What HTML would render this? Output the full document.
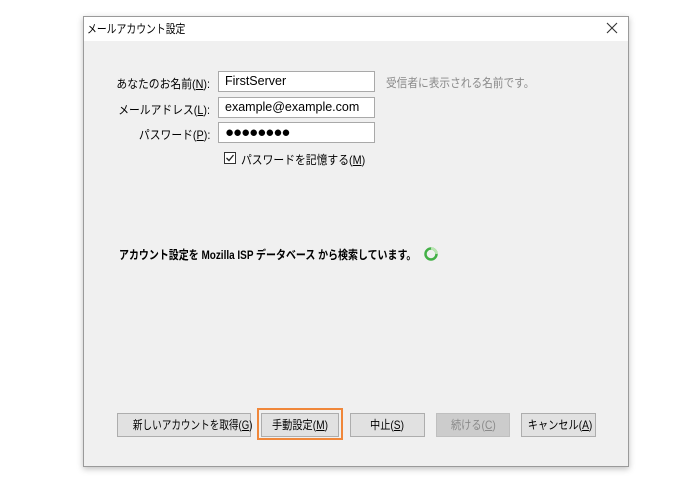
<!DOCTYPE html>
<html><head><meta charset="utf-8"><style>
*{box-sizing:border-box;margin:0;padding:0}
body{width:676px;height:481px;background:#fff;position:relative;font-family:"Liberation Sans","Noto Sans CJK JP",sans-serif;font-size:12px;color:#000;overflow:hidden}
.win{position:absolute;left:83px;top:16px;width:546px;height:451px;background:#f0f0f0;border:1px solid #9a9a9a;box-shadow:0 2px 6px rgba(0,0,0,.25)}
.title{position:absolute;left:0;top:0;width:100%;height:24px;background:#fff;font-size:12px;line-height:24px;padding-left:3px;white-space:nowrap}
.x{position:absolute;right:10px;top:5px}
.abs{position:absolute;white-space:nowrap}
.lbl{position:absolute;right:418px;text-align:right;white-space:nowrap;transform:scaleX(.9);transform-origin:right}
.inp{position:absolute;left:134px;width:157px;height:21px;background:#fff;border:1px solid #a9a9a9;padding-left:6px;line-height:19px;font-size:12.5px}
.btn{position:absolute;top:396px;height:24px;background:#e1e1e1;border:1px solid #adadad;text-align:center;line-height:22px;font-size:12px;white-space:nowrap;overflow:visible}
.btn span{display:inline-block;transform:scaleX(.85);transform-origin:center}
.sx{display:inline-block;transform-origin:left}
u{text-decoration:underline}
</style></head><body>
<div class="win">
<div class="title"><span class="sx" style="transform:scaleX(.82)">メールアカウント設定</span><svg class="x" width="12" height="12"><path d="M1 1L11 11M11 1L1 11" stroke="#333" stroke-width="1.1"/></svg></div>
<div class="lbl" style="top:58px">あなたのお名前(<u>N</u>):</div>
<div class="inp" style="top:54px">FirstServer</div>
<div class="abs" style="left:302px;top:57px;color:#8a8a8a"><span class="sx" style="transform:scaleX(.89)">受信者に表示される名前です。</span></div>
<div class="lbl" style="top:84px">メールアドレス(<u>L</u>):</div>
<div class="inp" style="top:80px">example@example.com</div>
<div class="lbl" style="top:109px">パスワード(<u>P</u>):</div>
<div class="inp" style="top:105px;font-size:15px;letter-spacing:-1px">●●●●●●●●</div>
<div class="abs" style="left:140px;top:135px;width:12px;height:12px;border:1px solid #333;background:#fff"><svg width="10" height="10" style="position:absolute;left:0;top:0"><path d="M1.5 5 L4 7.5 L8.5 2" stroke="#222" stroke-width="1.3" fill="none"/></svg></div>
<div class="abs" style="left:157px;top:134px"><span class="sx" style="transform:scaleX(.9)">パスワードを記憶する(<u>M</u>)</span></div>
<div class="abs" style="left:35px;top:229px;font-weight:bold;font-size:12px"><span class="sx" style="transform:scaleX(.83)">アカウント設定を Mozilla ISP データベース から検索しています。</span></div>
<svg class="abs" style="left:339px;top:229px" width="16" height="16"><circle cx="8" cy="8" r="5.5" stroke="#43b047" stroke-width="2.5" fill="none"/><path d="M8 2.5 A5.5 5.5 0 0 1 13.5 8" stroke="#b8e6b0" stroke-width="2.5" fill="none"/></svg>
<div class="btn" style="left:33px;width:134px"><span style="transform:scaleX(.8)">新しいアカウントを取得(<u>G</u>)</span></div>
<div class="abs" style="left:173px;top:391px;width:86px;height:32px;border:2px solid #f0873a"></div>
<div class="btn" style="left:177px;width:78px"><span>手動設定(<u>M</u>)</span></div>
<div class="btn" style="left:266px;width:75px"><span>中止(<u>S</u>)</span></div>
<div class="btn" style="left:352px;width:74px;background:#cccccc;border-color:#bfbfbf;color:#8a8a8a"><span>続ける(<u>C</u>)</span></div>
<div class="btn" style="left:437px;width:75px"><span>キャンセル(<u>A</u>)</span></div>
</div>
</body></html>
